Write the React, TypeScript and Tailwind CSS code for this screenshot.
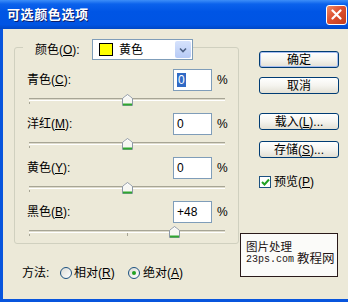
import React from 'react';

const rows = [
  { name: '青色', key: 'C', value: '0', selected: true },
  { name: '洋红', key: 'M', value: '0' },
  { name: '黄色', key: 'Y', value: '0' },
  { name: '黑色', key: 'B', value: '+48' },
];

const Thumb = () => (
  <svg width="11" height="12" viewBox="0 0 11 12">
    <path d="M0.5 4.5 L5.5 0.5 L10.5 4.5 L10.5 11.5 L0.5 11.5 Z" fill="#F7F7F3" stroke="#8C97A6" />
    <path d="M1 10.5 H10" stroke="#2FA62F" strokeWidth="2" />
    <path d="M1.5 4.8 L5.5 1.6 L9.5 4.8" fill="none" stroke="#FFFFFF" />
  </svg>
);

const Slider = ({ value }: { value: number }) => {
  // track runs 196px, centre is zero
  const left = 14 + 98 + (value / 100) * 98 - 5;
  return (
    <div className="relative h-[22px]">
      <div className="absolute left-[14px] top-[7px] w-[196px] h-[3px] border-t border-[#A7A595] border-b border-b-white bg-[#DEDBCC]" />
      <div className="absolute left-[14px] top-[11px] w-px h-[2px] bg-[#A7A595]" />
      <div className="absolute left-[112px] top-[10px] w-px h-[3px] bg-[#A7A595]" />
      <div className="absolute top-[3px]" style={{ left }}>
        <Thumb />
      </div>
    </div>
  );
};

const XpButton = ({ children, def }: { children: React.ReactNode; def?: boolean }) => (
  <button
    className={`w-[80px] h-[17px] rounded-[3px] border border-[#003C74] bg-[linear-gradient(to_bottom,#ffffff_0%,#f5f4ef_50%,#e3e0d4_100%)] text-[12px] leading-none text-black flex items-center justify-center ${def ? 'shadow-[inset_0_0_0_1px_#A7BDF0]' : ''}`}
  >
    {children}
  </button>
);

const Radio = ({ checked }: { checked?: boolean }) => (
  <span className="w-[12px] h-[12px] rounded-full border border-[#1C5180] bg-[linear-gradient(135deg,#DCDCD5,#ffffff)] flex items-center justify-center">
    {checked && <span className="w-[4px] h-[4px] rounded-full bg-[#21A121]" />}
  </span>
);

export default function App() {
  return (
    <div className="w-[348px] h-[302px] overflow-hidden relative flex flex-col bg-[#ECE9D8] text-black text-[12px] font-[family-name:'Liberation_Sans','Noto_Sans_CJK_SC',sans-serif]">
      {/* title bar */}
      <div className="h-[29px] flex items-center justify-between pl-[7px] pr-[1px] bg-[linear-gradient(to_bottom,#3d8ef8_0%,#0b62ec_14%,#0055e5_40%,#0054e3_85%,#0047c6_100%)]">
        <span className="text-white font-bold text-[13px] tracking-[0.6px] [text-shadow:1px_1px_0_#0a1e6e]">可选颜色选项</span>
        <span className="w-[21px] h-[20px] rounded-[3px] border border-white bg-[linear-gradient(135deg,#F08B64_0%,#DD5030_45%,#C23C1C_100%)] flex items-center justify-center">
          <svg width="11" height="11" viewBox="0 0 11 11">
            <path d="M1.5 1.5 L9.5 9.5 M9.5 1.5 L1.5 9.5" stroke="white" strokeWidth="2.2" strokeLinecap="round" />
          </svg>
        </span>
      </div>

      {/* body */}
      <div className="flex-1 flex border-l-[3px] border-b-[3px] border-[#0855DD]">
        <div className="pl-[11px] pt-[18px] flex flex-col">
          <div className="w-[225px] h-[197px] border border-[#D0D0BF] rounded-[3px]">
            {/* legend with colour menu */}
            <div className="-mt-[9px] ml-[8px] w-fit h-[21px] flex items-center bg-[#ECE9D8] pl-[12px]">
              <span className="w-[57px]">
                颜色(<u>O</u>):
              </span>
              <div className="w-[101px] h-[21px] border border-[#7F9DB9] bg-white flex items-center pl-[6px] pr-[1px]">
                <span className="w-[14px] h-[13px] bg-[#FFFF00] border border-black" />
                <span className="ml-[6px] flex-1">黄色</span>
                <span className="w-[16px] h-[17px] rounded-[2px] bg-[linear-gradient(to_bottom,#D6E2FC,#B7CBF6)] flex items-center justify-center">
                  <svg width="8" height="6" viewBox="0 0 8 6">
                    <path d="M1 1.5 L4 4.5 L7 1.5" fill="none" stroke="#4D6185" strokeWidth="1.6" />
                  </svg>
                </span>
              </div>
            </div>

            <div className="mt-[9px] flex flex-col">
              {rows.map((r) => (
                <div key={r.key}>
                  <div className="h-[22px] flex items-center pl-[12px]">
                    <span className="w-[146px]">
                      {r.name}(<u>{r.key}</u>):
                    </span>
                    <div className="w-[39px] h-[22px] border border-[#7F9DB9] bg-white flex items-center pl-[3px]">
                      {r.selected ? (
                        <span className="bg-[#316AC5] text-white px-[1px] leading-[14px]">{r.value}</span>
                      ) : (
                        <span>{r.value}</span>
                      )}
                    </div>
                    <span className="ml-[5px]">%</span>
                  </div>
                  <Slider value={parseInt(r.value, 10)} />
                </div>
              ))}
            </div>
          </div>

          {/* method */}
          <div className="mt-[21px] ml-[8px] h-[16px] flex items-center">
            <span className="w-[38px]">方法:</span>
            <Radio />
            <span className="ml-[2px] w-[54px]">
              相对(<u>R</u>)
            </span>
            <Radio checked />
            <span className="ml-[3px]">
              绝对(<u>A</u>)
            </span>
          </div>
        </div>

        {/* buttons */}
        <div className="ml-[20px] pt-[22px] flex flex-col">
          <XpButton def>确定</XpButton>
          <div className="mt-[9px]">
            <XpButton>取消</XpButton>
          </div>
          <div className="mt-[19px]">
            <XpButton>
              载入(<u>L</u>)...
            </XpButton>
          </div>
          <div className="mt-[11px]">
            <XpButton>
              存储(<u>S</u>)...
            </XpButton>
          </div>
          <div className="mt-[15px] flex items-center">
            <span className="w-[12px] h-[12px] border border-[#1C5180] bg-white flex items-center justify-center">
              <svg width="9" height="8" viewBox="0 0 9 8">
                <path d="M1 4 L3.5 6.5 L8 1.5" fill="none" stroke="#21A121" strokeWidth="2" />
              </svg>
            </span>
            <span className="ml-[3px]">
              预览(<u>P</u>)
            </span>
          </div>
        </div>
      </div>

      {/* watermark */}
      <div className="absolute left-[240px] top-[233px] w-[98px] h-[44px] border border-[#2A1A1A] bg-[#FBFBF9] flex pl-[5px] pt-[5px] text-[#231515] whitespace-nowrap">
        <div className="flex flex-col leading-[14px]">
          <span className="text-[11.5px] font-[family-name:'Noto_Sans_CJK_SC',sans-serif]">图片处理</span>
          <span className="text-[10px] font-[family-name:'Liberation_Mono',monospace]">23ps.com</span>
        </div>
        <span className="ml-[3px] mt-[13px] text-[12.5px] leading-none font-[family-name:'Noto_Sans_CJK_SC',sans-serif]">教程网</span>
      </div>
    </div>
  );
}
